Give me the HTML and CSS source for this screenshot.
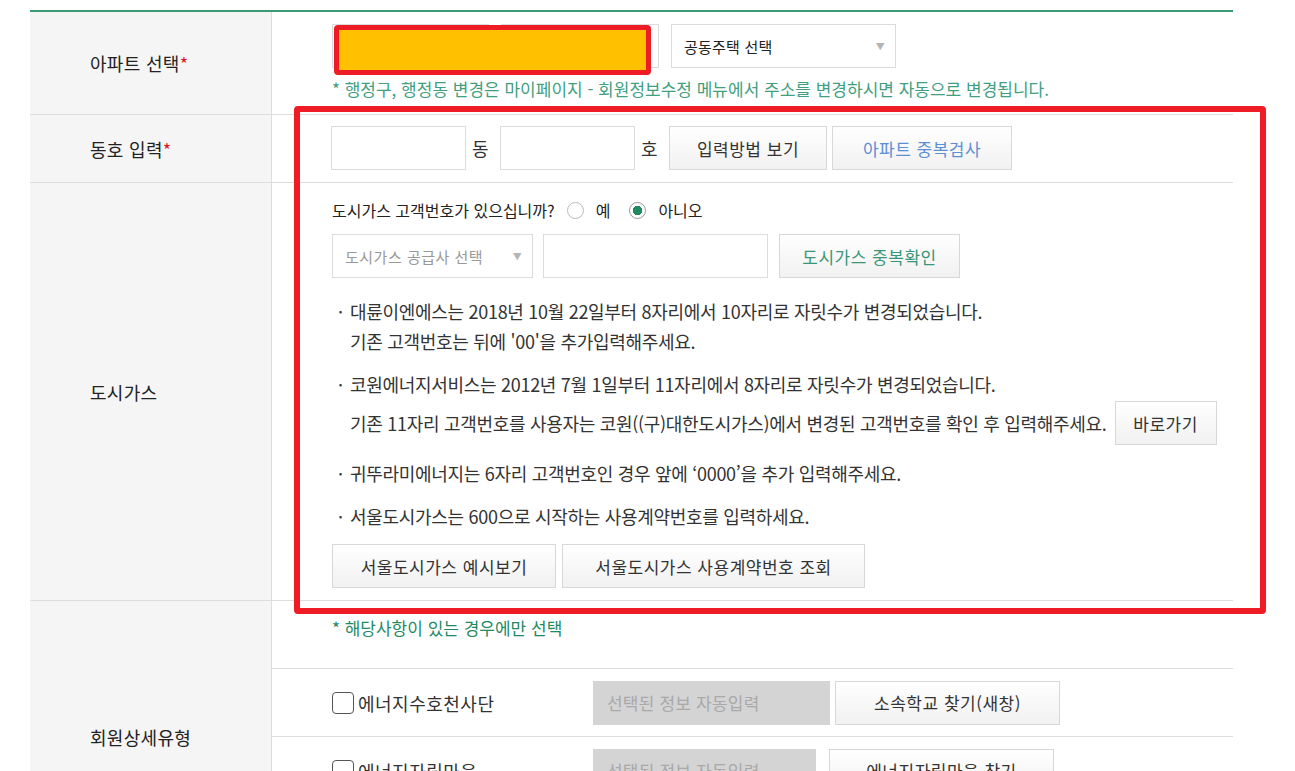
FILE: index.html
```html
<!DOCTYPE html>
<html lang="ko">

<head>
    <meta charset="UTF-8">
    <title>회원정보 입력</title>
    <link rel="stylesheet" href="styles.css">
</head>

<body>
    <div class="form-table">
        <div class="row row-apt">
            <div class="th">아파트 선택<em>*</em></div>
            <div class="td">
                <div class="line">
                    <div class="select w157"><span></span></div>
                    <div class="select w158"><span></span></div>
                    <div class="select w225"><span class="txt-dark">공동주택 선택</span><i class="arrow">▼</i></div>
                </div>
                <p class="note">* 행정구, 행정동 변경은 마이페이지 - 회원정보수정 메뉴에서 주소를 변경하시면 자동으로 변경됩니다.</p>
            </div>
        </div>

        <div class="row row-dongho">
            <div class="th">동호 입력<em>*</em></div>
            <div class="td">
                <div class="line">
                    <input class="input w135" type="text">
                    <span class="unit">동</span>
                    <input class="input w135" type="text">
                    <span class="unit">호</span>
                    <button class="btn w158">입력방법 보기</button>
                    <button class="btn w180 blue">아파트 중복검사</button>
                </div>
            </div>
        </div>

        <div class="row row-gas">
            <div class="th">도시가스</div>
            <div class="td">
                <div class="question">
                    도시가스 고객번호가 있으십니까?
                    <label class="radio"><i></i>예</label>
                    <label class="radio on"><i></i>아니오</label>
                </div>
                <div class="line gas-line">
                    <div class="select w201 disabled"><span>도시가스 공급사 선택</span><i class="arrow">▼</i></div>
                    <input class="input w225" type="text">
                    <button class="btn w181 green">도시가스 중복확인</button>
                </div>
                <ul class="info">
                    <li>
                        <p>대륜이엔에스는 2018년 10월 22일부터 8자리에서 10자리로 자릿수가 변경되었습니다.</p>
                        <p>기존 고객번호는 뒤에 '00'을 추가입력해주세요.</p>
                    </li>
                    <li>
                        <p>코원에너지서비스는 2012년 7월 1일부터 11자리에서 8자리로 자릿수가 변경되었습니다.</p>
                        <p class="with-btn">기존 11자리 고객번호를 사용자는 코원((구)대한도시가스)에서 변경된 고객번호를 확인 후 입력해주세요. <button class="btn w102">바로가기</button></p>
                    </li>
                    <li>
                        <p>귀뚜라미에너지는 6자리 고객번호인 경우 앞에 ‘0000’을 추가 입력해주세요.</p>
                    </li>
                    <li>
                        <p>서울도시가스는 600으로 시작하는 사용계약번호를 입력하세요.</p>
                    </li>
                </ul>
                <div class="line btns">
                    <button class="btn w224">서울도시가스 예시보기</button>
                    <button class="btn w303">서울도시가스 사용계약번호 조회</button>
                </div>
            </div>
        </div>

        <div class="row row-type">
            <div class="th">회원상세유형</div>
            <div class="td sub">
                <div class="sub-row">
                    <p class="note dark">* 해당사항이 있는 경우에만 선택</p>
                </div>
                <div class="sub-row">
                    <label class="check"><i></i>에너지수호천사단</label>
                    <div class="auto w237">선택된 정보 자동입력</div>
                    <button class="btn w225">소속학교 찾기(새창)</button>
                </div>
                <div class="sub-row">
                    <label class="check"><i></i>에너지자립마을</label>
                    <div class="auto w223">선택된 정보 자동입력</div>
                    <button class="btn w225 ml13">에너지자립마을 찾기</button>
                </div>
                <div class="sub-row">
                    <label class="check"><i></i>에코마일리지 단체</label>
                    <div class="auto w223">선택된 정보 자동입력</div>
                    <button class="btn w225 ml13">단체 찾기</button>
                </div>
            </div>
        </div>

        <!-- 표시용 강조 박스 -->
        <div class="mark mark-apt"></div>
        <div class="mark mark-area"></div>
    </div>
</body>

</html>
```

FILE: styles.css
```css
* {
    padding: 0;
    margin: 0;
    box-sizing: border-box;
}

body {
    background: #fff;
    font-family: "Noto Sans CJK KR", "Noto Sans", sans-serif;
    color: #333;
}

ul {
    list-style: none;
}

.form-table {
    position: relative;
    width: 1203px;
    margin: 10px 0 0 30px;
    border-top: 2px solid #3d9a77;
}

.row {
    display: grid;
    grid-template-columns: 242px 1fr;
    border-bottom: 1px solid #ddd;
}

.th {
    display: flex;
    align-items: center;
    padding-left: 60px;
    background: #f5f5f5;
    border-right: 1px solid #ddd;
    font-size: 18px;
    letter-spacing: 0.3px;
    color: #222;
}

.th em {
    font-style: normal;
    color: #e0161d;
}

.td {
    padding-left: 60px;
}

.line {
    display: flex;
    align-items: center;
}

/* 입력요소 */
.select,
.input {
    height: 44px;
    border: 1px solid #dcdcdc;
    background: #fff;
    font-family: inherit;
}

.select {
    position: relative;
    display: flex;
    align-items: center;
    padding-left: 12px;
    font-size: 15px;
    letter-spacing: 0.2px;
    color: #222;
    margin-right: 12px;
}

.select.disabled span {
    color: #999;
    letter-spacing: 0.5px;
}

.select .arrow {
    position: absolute;
    right: 10px;
    top: 15px;
    font-style: normal;
    font-size: 9px;
    color: #b5b5b5;
}

.unit {
    width: 34px;
    padding-left: 6px;
    font-size: 18px;
    color: #333;
}

.btn {
    height: 44px;
    border: 1px solid #d8d8d8;
    background: linear-gradient(#ffffff, #f1f1f1);
    font-family: inherit;
    font-size: 17px;
    letter-spacing: 0.5px;
    color: #333;
}

.btn.blue {
    color: #5b8fd4;
}

.btn.green {
    color: #3a9677;
}

.w102 { width: 102px; }
.w135 { width: 135px; }
.w157 { width: 157px; }
.w158 { width: 158px; }
.w180 { width: 180px; }
.w181 { width: 181px; }
.w201 { width: 201px; }
.w223 { width: 223px; }
.w224 { width: 224px; }
.w225 { width: 225px; }
.w237 { width: 237px; }
.w303 { width: 303px; }

.note {
    font-size: 17px;
    line-height: 20px;
    letter-spacing: 0;
    color: #3f9f7f;
}

.note.dark {
    color: #1f8a63;
}

/* 아파트 선택 */
.row-apt .td {
    padding-top: 12px;
    padding-bottom: 15px;
}

.row-apt .note {
    margin-top: 11px;
}

/* 동호 */
.row-dongho .td {
    padding: 11px 0 12px 59px;
}

.row-dongho .btn + .btn {
    margin-left: 5px;
}

/* 도시가스 */
.row-gas .td {
    padding-top: 16px;
    padding-bottom: 12px;
}

.question {
    display: flex;
    align-items: center;
    height: 22px;
    font-size: 16px;
    letter-spacing: 0;
    color: #222;
}

.radio {
    display: flex;
    align-items: center;
    margin-left: 12px;
}

.radio i {
    width: 17px;
    height: 17px;
    border: 1px solid #bbb;
    border-radius: 50%;
    margin-right: 12px;
    background: #fff;
}

.radio + .radio {
    margin-left: 19px;
}

.radio.on i {
    border-color: #999;
    background: radial-gradient(circle, #1e8a5e 0 4.5px, #fff 5px);
}

.gas-line {
    margin-top: 13px;
}

.gas-line .select {
    margin-right: 10px;
}

.gas-line .input {
    margin-right: 11px;
}

.info {
    margin-top: 18px;
    font-size: 18px;
    letter-spacing: -0.3px;
    color: #333;
}

.info li {
    position: relative;
    padding-left: 18px;
    margin-bottom: 13px;
}

.info li:before {
    content: '·';
    position: absolute;
    left: 6px;
    top: 0;
    line-height: 30px;
}

.info p {
    line-height: 30px;
}

.info .with-btn {
    display: flex;
    align-items: center;
    margin-top: 2px;
}

.info .with-btn .btn {
    margin-left: 8px;
}

.btns .btn + .btn {
    margin-left: 6px;
}

/* 회원상세유형 */
.td.sub {
    padding-left: 0;
}

.sub-row {
    display: flex;
    align-items: center;
    height: 68px;
    padding-left: 60px;
    border-bottom: 1px solid #ddd;
}

.sub-row:last-child {
    border-bottom: 0;
}

.sub-row .note {
    align-self: flex-start;
    margin-top: 17px;
}

.check {
    display: flex;
    align-items: center;
    width: 261px;
    font-size: 18px;
    letter-spacing: 0.5px;
    color: #333;
}

.check i {
    width: 22px;
    height: 22px;
    border: 1.5px solid #555;
    border-radius: 4px;
    margin-right: 4px;
}

.auto {
    display: flex;
    align-items: center;
    height: 44px;
    padding-left: 14px;
    background: #d4d4d4;
    font-size: 17px;
    letter-spacing: 0.2px;
    color: #a9a9a9;
    margin-right: 5px;
}

.ml13 {
    margin-left: 8px;
}

/* 강조 표시 */
.mark {
    position: absolute;
    border: 6px solid #ee1c25;
    border-radius: 4px;
}

.mark-apt {
    left: 304px;
    top: 13px;
    width: 317px;
    height: 50px;
    border-width: 5px;
    background: #ffc000;
}

.mark-area {
    left: 264px;
    top: 94px;
    width: 972px;
    height: 508px;
}
```
